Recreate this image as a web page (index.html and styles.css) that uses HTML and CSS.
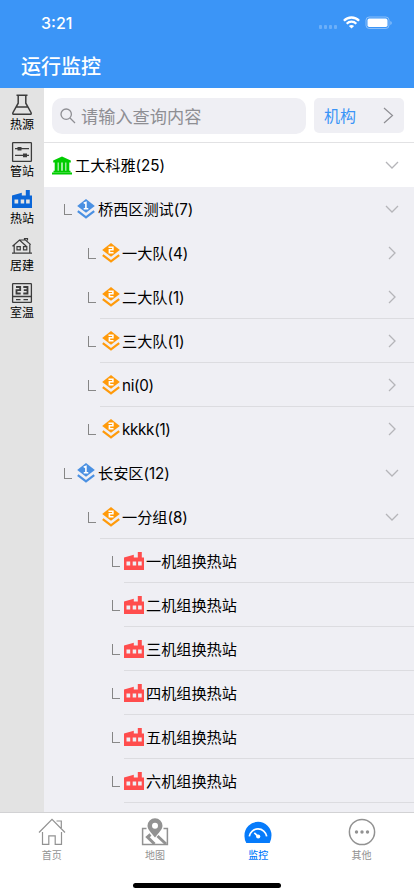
FILE: index.html
```html
<!DOCTYPE html>
<html lang="zh-CN">
<head>
<meta charset="utf-8">
<meta name="viewport" content="width=device-width, initial-scale=1">
<title>运行监控</title>
<link rel="stylesheet" href="styles.css">
</head>
<body>
<svg class="defs" width="0" height="0">
  <symbol id="right" viewBox="0 0 8 14"><path d="M1 1l6 6-6 6" fill="none" stroke="currentColor" stroke-width="1.3"/></symbol>
  <symbol id="down" viewBox="0 0 14 8"><path d="M1 1l6 6 6-6" fill="none" stroke="currentColor" stroke-width="1.3"/></symbol>
  <symbol id="layer" viewBox="0 0 18 20"><path d="M9 0l8.8 7L9 13.8.2 7z" fill="currentColor"/><path d="M.8 12.2L9 18.4l8.2-6.2" fill="none" stroke="currentColor" stroke-width="2.2"/></symbol>
  <symbol id="one" viewBox="0 0 18 20"><use href="#layer"/><path d="M6.7 4.3l2.2-.9v6.4M6.7 9.8h4.6" fill="none" stroke="#fff" stroke-width="1.6"/></symbol>
  <symbol id="two" viewBox="0 0 18 20"><use href="#layer"/><path d="M6.5 4.2h4.4v2.6H7.4v2.9h4.1" fill="none" stroke="#fff" stroke-width="1.6"/></symbol>
  <symbol id="plant" viewBox="0 0 20 18"><path fill="currentColor" fill-rule="evenodd" d="M0 5.4l9.8-2.7v2.7h4V0h4v5.4H20V18H0zM2.5 9.4v4h3.7v-4zm6.2 0v4h3.5v-4zm5.4 0v4h3.6v-4z"/></symbol>
</svg>
<header class="header">
  <div class="status">
    <span class="time">3:21</span>
    <svg class="signals" width="74" height="14" viewBox="0 0 74 14">
      <g fill="#fff" fill-opacity=".25"><rect x="1" y="9" width="3" height="4" rx="1"/><rect x="6" y="9" width="3" height="4" rx="1"/><rect x="11" y="9" width="3" height="4" rx="1"/><rect x="16" y="9" width="3" height="4" rx="1"/></g>
      <g fill="none" stroke="#fff" stroke-width="2.3"><path d="M25.9 4.7a10.6 10.6 0 0 1 15.2 0M28.7 7.7a6.8 6.8 0 0 1 9.6 0"/></g>
      <path d="M33.5 12.6l-2.6-2.5a3.8 3.8 0 0 1 5.2 0z" fill="#fff"/>
      <rect x="48" y="1" width="23" height="11.5" rx="3.2" fill="none" stroke="#fff" stroke-opacity=".4"/>
      <rect x="49.5" y="2.6" width="20" height="8.4" rx="1.8" fill="#fff"/><path d="M72.4 5v4q1.3-.6 1.3-2T72.4 5" fill="#fff" fill-opacity=".45"/>
    </svg>
  </div>
  <h1 class="title">运行监控</h1>
</header>
<main class="main">
  <nav class="side">
    <a class="side-item"><svg width="22" height="22" viewBox="0 0 22 22" fill="none" stroke="#3c3c3c" stroke-width="1.5"><path d="M5.5 1.2h11M7.2 1.2v8L2 18.5Q1.2 20.3 3 20.3h16q1.8 0 1-1.8L14.8 9.2v-8M5 13h12"/></svg><span>热源</span></a>
    <a class="side-item"><svg width="22" height="22" viewBox="0 0 22 22" fill="none" stroke="#3c3c3c" stroke-width="1.3"><rect x="1.6" y="1.6" width="18.8" height="18.8" rx=".6"/><path d="M4 7.7h14M4 14.4h14"/><path d="M6.5 7.7h4M12 14.4h4" stroke-width="3.6"/></svg><span>管站</span></a>
    <a class="side-item on"><svg width="22" height="22" viewBox="0 0 22 22"><use href="#plant" x="1" y="2" width="20" height="18"/></svg><span>热站</span></a>
    <a class="side-item"><svg width="22" height="22" viewBox="0 0 22 22" fill="none" stroke="#3c3c3c" stroke-width="1.2"><path d="M1.5 11.3l7-6.3 6.8 6.3M8.5 5h6l5.2 4.6M13.5 4.8V3.6h3v2M3.2 10.3v7.6M18.8 9.5v8.4M1 18.2h20M6 11.6h3.3v3.3H6zM12.5 11.6h3.3v3.3h-3.3z"/></svg><span>居建</span></a>
    <a class="side-item"><svg width="22" height="22" viewBox="0 0 22 22" fill="none" stroke="#3c3c3c" stroke-width="1.3"><rect x="1.6" y="1.6" width="18.8" height="18.8" rx=".6"/><path d="M2 14.5h18M5 17.6h4.5M12.5 17.6H17"/><path d="M5 5h4.2v3.2H5.5v3.3h4.2M12.3 5h4.2v6.5h-4.2M12.8 8.2h3.7" stroke-width="1.8"/></svg><span>室温</span></a>
  </nav>
  <section class="content">
    <div class="search">
      <div class="field"><svg width="16" height="16" viewBox="0 0 16 16" fill="none" stroke="#8e8e93" stroke-width="1.3"><circle cx="6.2" cy="6.2" r="5.2"/><path d="M10 10l5 5"/></svg><span>请输入查询内容</span></div>
      <div class="org"><span>机构</span><svg width="11" height="17" viewBox="0 0 11 17" fill="none" stroke="#8e8e93" stroke-width="1.2"><path d="M1 1l8.5 7.5L1 16"/></svg></div>
    </div>
    <ul class="tree">
      <li class="row root"><svg class="bank" width="20" height="19" viewBox="0 0 20 19" fill="#0c0"><path d="M10 .4l8.8 4.1v2H1.2v-2zM2.7 6h3v9.5h-3zm3.9 0h2.8v9.5H6.6zm4 0h2.8v9.5h-2.8zm3.7 0h3v9.5h-3zM1.5 14.7h17v1.6h-17zM0 16.6h20v2H0z"/></svg><span>工大科雅(25)</span><svg class="down"><use href="#down"/></svg></li>
      <li class="row l1"><i class="elbow"></i><svg class="layer blue"><use href="#one"/></svg><span>桥西区测试(7)</span><svg class="down"><use href="#down"/></svg></li>
      <li class="row l2"><i class="elbow"></i><svg class="layer"><use href="#two"/></svg><span>一大队(4)</span><svg class="right"><use href="#right"/></svg></li>
      <li class="row l2 line"><i class="elbow"></i><svg class="layer"><use href="#two"/></svg><span>二大队(1)</span><svg class="right"><use href="#right"/></svg></li>
      <li class="row l2 line"><i class="elbow"></i><svg class="layer"><use href="#two"/></svg><span>三大队(1)</span><svg class="right"><use href="#right"/></svg></li>
      <li class="row l2 line"><i class="elbow"></i><svg class="layer"><use href="#two"/></svg><span class="latin">ni(0)</span><svg class="right"><use href="#right"/></svg></li>
      <li class="row l2"><i class="elbow"></i><svg class="layer"><use href="#two"/></svg><span class="latin">kkkk(1)</span><svg class="right"><use href="#right"/></svg></li>
      <li class="row l1"><i class="elbow"></i><svg class="layer blue"><use href="#one"/></svg><span>长安区(12)</span><svg class="down"><use href="#down"/></svg></li>
      <li class="row l2 line"><i class="elbow"></i><svg class="layer"><use href="#two"/></svg><span>一分组(8)</span><svg class="down"><use href="#down"/></svg></li>
      <li class="row l3 line"><i class="elbow"></i><svg class="plant"><use href="#plant"/></svg><span>一机组换热站</span></li>
      <li class="row l3 line"><i class="elbow"></i><svg class="plant"><use href="#plant"/></svg><span>二机组换热站</span></li>
      <li class="row l3 line"><i class="elbow"></i><svg class="plant"><use href="#plant"/></svg><span>三机组换热站</span></li>
      <li class="row l3 line"><i class="elbow"></i><svg class="plant"><use href="#plant"/></svg><span>四机组换热站</span></li>
      <li class="row l3 line"><i class="elbow"></i><svg class="plant"><use href="#plant"/></svg><span>五机组换热站</span></li>
      <li class="row l3 line"><i class="elbow"></i><svg class="plant"><use href="#plant"/></svg><span>六机组换热站</span></li>
    </ul>
  </section>
</main>
<footer class="footer">
  <nav class="tabs">
    <a class="tab"><svg width="28" height="28" viewBox="0 0 28 28" fill="none" stroke="currentColor" stroke-width="1.2"><path d="M1 14.5L14 1.3l13 13.2M4.5 14v12.4h6.3v-8.5h6.4v8.5h6.3V14M18.5 3h4.8v7"/></svg><span>首页</span></a>
    <a class="tab"><svg width="28" height="28" viewBox="0 0 28 28"><path d="M5.5 10.5H1.6v16h24.8v-16h-3.9" fill="none" stroke="currentColor" stroke-width="1.5"/><path d="M14 19.5C10 14.5 6.5 11.3 6.5 7.7a7.5 7.5 0 0 1 15 0c0 3.6-3.5 6.8-7.5 11.8z" fill="currentColor"/><circle cx="14" cy="7.7" r="3" fill="#fff"/><path d="M9.5 16.5L6.5 19l7 7M16.5 18l8.5 8" fill="none" stroke="currentColor" stroke-width="3"/></svg><span>地图</span></a>
    <a class="tab on"><svg width="28" height="28" viewBox="0 0 28 28"><path d="M2.3 25A13.5 13.5 0 0 1 .5 17.3a13.5 13.5 0 0 1 27 0q0 4-1.8 7.7z" fill="currentColor"/><path d="M5.3 18.4a8.8 8.8 0 0 1 17.4 0" fill="none" stroke="#fff" stroke-width="1.7"/><path d="M10.3 14.8l4 3.8" fill="none" stroke="#fff" stroke-width="1.7"/><circle cx="14.2" cy="18.5" r="2.1" fill="#fff"/></svg><span>监控</span></a>
    <a class="tab"><svg width="28" height="28" viewBox="0 0 28 28"><circle cx="14" cy="14" r="12.6" fill="none" stroke="currentColor" stroke-width="1.5"/><g fill="currentColor"><circle cx="8.5" cy="14" r="1.7"/><circle cx="14" cy="14" r="1.7"/><circle cx="19.5" cy="14" r="1.7"/></g></svg><span>其他</span></a>
  </nav>
  <div class="home"></div>
</footer>
</body>
</html>
```
FILE: styles.css
```css
* { box-sizing: border-box; }
body {
  margin: 0;
  width: 414px;
  height: 896px;
  display: flex;
  flex-direction: column;
  overflow: hidden;
  background: #fff;
  color: #000;
  font-family: Inter, "Noto Sans CJK SC", sans-serif;
}
svg { display: block; flex: none; }
.defs { position: absolute; }
.header { height: 88px; background: #3b95f7; color: #fff; flex: none; }
.status {
  height: 44px;
  padding: 2px 22px 0 41px;
  display: flex;
  align-items: center;
  justify-content: space-between;
}
.time { font-size: 16px; font-weight: 500; }
.title { margin: 0; padding: 1px 0 0 21px; font-size: 20px; font-weight: 500; line-height: 44px; }
.main { display: flex; height: 724px; flex: none; }
.side { width: 44px; background: #e3e3e3; padding-top: 5px; flex: none; }
.side-item {
  height: 47px;
  padding-top: 1px;
  display: flex;
  flex-direction: column;
  align-items: center;
  color: #000;
  font-size: 12px;
  line-height: 18px;
}
.on svg { color: #0a66d8; }
.content { flex: 1; overflow: hidden; background: #efeff4; }
.search {
  height: 55px;
  padding: 10px 10px 0 8px;
  display: flex;
  gap: 8px;
  background: #fff;
  border-bottom: 1px solid #e2e2e4;
}
.field {
  width: 254px;
  height: 36px;
  padding-left: 8px;
  display: flex;
  align-items: center;
  gap: 5px;
  border-radius: 10px;
  background: #efeff4;
  color: #8e8e93;
  font-size: 17.2px;
}
.field span, .org span { padding-bottom: 2px; }
.org {
  width: 90px;
  height: 35px;
  padding: 0 10px;
  display: flex;
  align-items: center;
  justify-content: space-between;
  border-radius: 5px;
  background: #efeff4;
  color: #3b95f7;
  font-size: 16px;
}
.tree { list-style: none; margin: 0; padding: 0; }
.row {
  height: 44px;
  display: flex;
  align-items: center;
  padding-right: 16px;
  font-size: 15.2px;
  white-space: nowrap;
}
.row span { padding-bottom: 2px; letter-spacing: -.05px; }
.row .latin { padding-bottom: 0; letter-spacing: -.3px; }
.row.root { background: #fff; padding-left: 8px; }
.bank { margin-right: 3px; }
.l1 { padding-left: 20px; }
.l2 { padding-left: 44px; }
.l3 { padding-left: 68px; }
.line { background: linear-gradient(#dcdce0, #dcdce0) bottom right / 314px 1px no-repeat; }
.l3.line { background-size: 290px 1px; }
.elbow { width: 8px; height: 11px; margin-right: 5px; border-left: 1.5px solid #858585; border-bottom: 1px solid #888; }
.layer { width: 18px; height: 20px; margin-right: 3px; color: #ff9a0a; }
.blue { color: #4a90e2; }
.l2 .layer { margin-right: 2px; margin-left: 1px; }
.l3 .elbow { margin-right: 4px; }
.plant { width: 20px; height: 18px; margin-right: 2px; color: #ff4d4d; }
.right, .down { margin-left: auto; color: #b5b5b9; }
.right { width: 8px; height: 14px; margin-right: 2px; }
.down { width: 14px; height: 8px; margin-right: -1px; }
.footer { height: 84px; border-top: 1px solid #d2d2d4; background: #fff; display: flex; flex-direction: column; align-items: center; }
.tabs { display: grid; grid-template-columns: repeat(4, 103.3px); width: 414px; height: 70px; }
.tab {
  display: flex;
  flex-direction: column;
  align-items: center;
  padding-top: 5px;
  color: #929292;
  font-size: 10px;
  line-height: 18px;
}
.tab.on, .tab.on svg { color: #067bfb; }
.tab.on { font-weight: 500; }
.home { width: 148px; height: 5px; border-radius: 3px; background: #000; }
```
